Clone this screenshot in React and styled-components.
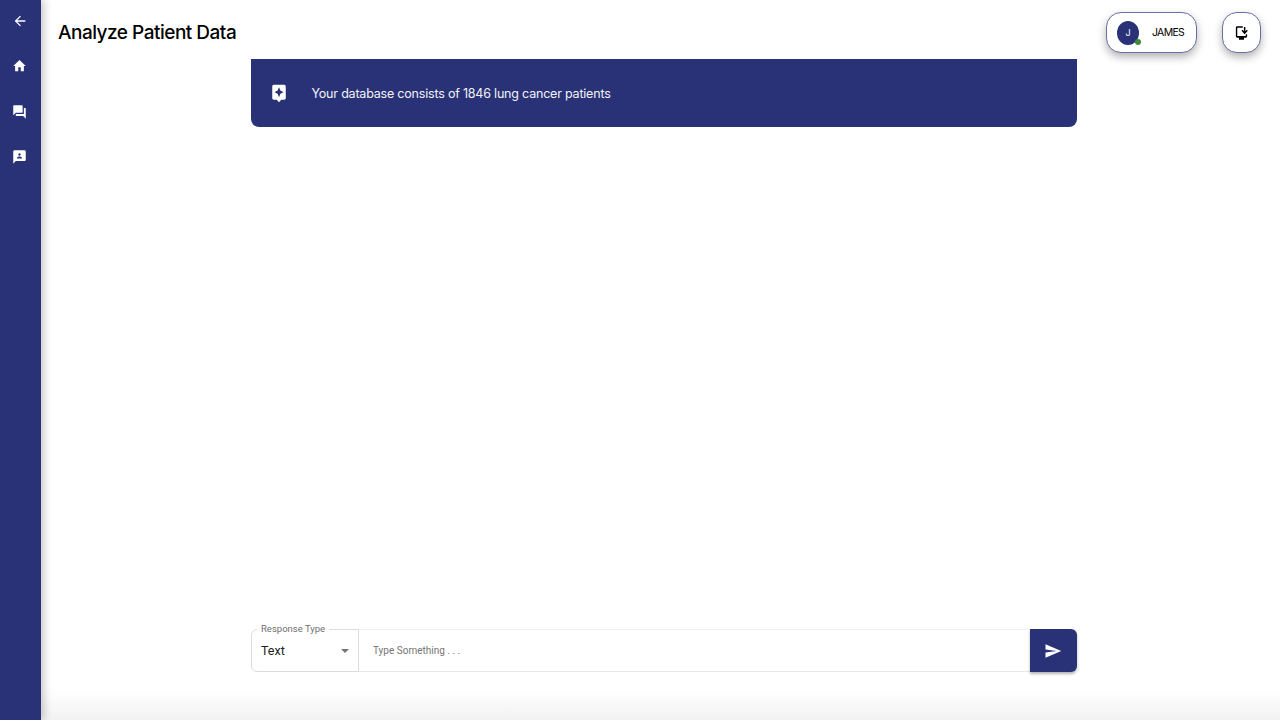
import styled, { createGlobalStyle } from "styled-components";

const NAVY = "#293276";

const Global = createGlobalStyle`
  html, body { margin: 0; padding: 0; background: #fff; }
  #root { height: 720px; overflow: hidden; }
  * { box-sizing: border-box; }
`;

// the reference is squeezed a little sideways, so icons take separate width/height
const Icon = ({ d, w = 24, h = 24 }) => (
  <svg width={w} height={h} viewBox="0 0 24 24" preserveAspectRatio="none" fill="currentColor" fillRule="evenodd">
    <path d={d} />
  </svg>
);

const ICONS = {
  back: "M20 11H7.83l5.59-5.59L12 4l-8 8 8 8 1.41-1.41L7.83 13H20v-2z",
  home: "M10 20v-6h4v6h5v-8h3L12 3 2 12h3v8z",
  chats: "M21 6h-2v9H6v2c0 .55.45 1 1 1h11l4 4V7c0-.55-.45-1-1-1m-4 6V3c0-.55-.45-1-1-1H3c-.55 0-1 .45-1 1v14l4-4h10c.55 0 1-.45 1-1",
  feedback: "M20 2H4c-1.1 0-2 .9-2 2v18l4-4h14c1.1 0 2-.9 2-2V4c0-1.1-.9-2-2-2zM12 6.4a1.9 1.9 0 1 1 0 3.8 1.9 1.9 0 0 1 0-3.8zM8 14.4v-1c0-1.3 2.7-2.1 4-2.1s4 .8 4 2.1v1z",
  assistant: "M19 2H5c-1.11 0-2 .9-2 2v14c0 1.1.89 2 2 2h4l3 3 3-3h4c1.1 0 2-.9 2-2V4c0-1.1-.9-2-2-2m-5.12 10.88L12 17l-1.88-4.12L6 11l4.12-1.88L12 5l1.88 4.12L18 11z",
  install: "M5 2h9v2.2H5.2v12.2h13.6V14H21v3c0 1.1-.9 2-2 2h-3v3H8v-3H5c-1.1 0-2-.9-2-2V4c0-1.1.9-2 2-2zM15.8 3h2.4v6.4l2.3-2.3 1.6 1.6-5.1 5.1-5.1-5.1 1.6-1.6 2.3 2.3z",
  send: "M2.01 21 23 12 2.01 3 2 10l15 2-15 2z",
};

export default function App() {
  return (
    <Page>
      <Global />
      <Sidebar>
        <NavButton><Icon d={ICONS.back} w={16} h={16} /></NavButton>
        <NavButton><Icon d={ICONS.home} w={15} h={16} /></NavButton>
        <NavButton><Icon d={ICONS.chats} w={15} h={16} /></NavButton>
        <NavButton><Icon d={ICONS.feedback} w={15} h={16} /></NavButton>
      </Sidebar>
      <Main>
        <Header>
          <Title>Analyze Patient Data</Title>
          <HeaderActions>
            <UserPill>
              <Avatar>J<OnlineDot /></Avatar>
              <UserName>JAMES</UserName>
            </UserPill>
            <IconPill><Icon d={ICONS.install} w={15} h={16} /></IconPill>
          </HeaderActions>
        </Header>
        <Content>
          <Banner>
            <BannerIcon><Icon d={ICONS.assistant} w={18} h={20} /></BannerIcon>
            <BannerText>Your database consists of 1846 lung cancer patients</BannerText>
          </Banner>
          <Composer>
            <SelectBox>
              <SelectLabel>Response Type</SelectLabel>
              <SelectValue>Text</SelectValue>
              <Caret />
            </SelectBox>
            <PromptInput>Type Something . . .</PromptInput>
            <SendButton><Icon d={ICONS.send} w={18} h={18} /></SendButton>
          </Composer>
        </Content>
      </Main>
    </Page>
  );
}

const Page = styled.div`
  position: relative;
  display: flex;
  height: 720px;
  font-family: "Inter", "Liberation Sans", sans-serif;
  color: #000;
  overflow: hidden;

  /* soft fade at the bottom edge of the page */
  &::after {
    content: "";
    position: absolute;
    left: 41px;
    right: 0;
    bottom: 0;
    height: 30px;
    background: linear-gradient(to bottom, rgba(0, 0, 0, 0), rgba(0, 0, 0, 0.05));
    pointer-events: none;
  }
`;

const Sidebar = styled.nav`
  position: relative;
  z-index: 1;
  flex: 0 0 41px;
  display: flex;
  flex-direction: column;
  align-items: center;
  gap: 29.3px;
  padding: 13px 0 0 0;
  background: ${NAVY};
  box-shadow: 3px 0 8px rgba(0, 0, 0, 0.22);
`;

const NavButton = styled.div`
  display: flex;
  justify-content: center;
  width: 16px;
  height: 16px;
  margin-left: -2px;
  color: #fff;
`;

const Main = styled.main`
  flex: 1;
  display: flex;
  flex-direction: column;
  min-width: 0;
`;

const Header = styled.header`
  flex: 0 0 59px;
  display: flex;
  align-items: flex-start;
  justify-content: space-between;
  padding: 12px 19px 0 17px;
`;

const Title = styled.h1`
  margin: 8px 0 0;
  font-size: 19px;
  line-height: 26px;
  font-weight: 500;
  letter-spacing: -0.5px;
  color: #000;
`;

const HeaderActions = styled.div`
  display: flex;
  gap: 25px;
`;

const Pill = styled.div`
  display: flex;
  align-items: center;
  height: 41px;
  background: #fff;
  border: 1px solid #6a70a3;
  border-radius: 15px;
  box-shadow: 0 4px 8px rgba(0, 0, 0, 0.3);
`;

const UserPill = styled(Pill)`
  width: 91px;
  padding-left: 10px;
`;

const IconPill = styled(Pill)`
  width: 39px;
  justify-content: center;
`;

const Avatar = styled.div`
  position: relative;
  display: flex;
  align-items: center;
  justify-content: center;
  width: 22px;
  height: 24px;
  border-radius: 50%;
  background: ${NAVY};
  color: #fff;
  font-size: 9px;
  font-weight: 400;
`;

const OnlineDot = styled.span`
  position: absolute;
  right: -2px;
  bottom: 0;
  width: 6px;
  height: 6px;
  border-radius: 50%;
  background: #3d8b37;
`;

const UserName = styled.span`
  margin-left: 13px;
  font-size: 10.5px;
  font-weight: 400;
  letter-spacing: -0.7px;
`;

const Content = styled.div`
  flex: 1;
  display: flex;
  flex-direction: column;
  justify-content: space-between;
  width: 826px;
  margin-left: 210px;
  padding-bottom: 48px;
`;

const Banner = styled.section`
  display: flex;
  align-items: center;
  height: 68px;
  padding: 0 0 0 19px;
  background: ${NAVY};
  border-radius: 0 0 8px 8px;
  color: #fff;
`;

const BannerIcon = styled.div`
  display: flex;
  width: 18px;
  height: 20px;
`;

const BannerText = styled.p`
  margin: 0 0 0 23.5px;
  font-size: 12.5px;
  font-weight: 400;
  letter-spacing: -0.2px;
  color: #f2f3f8;
`;

const Composer = styled.div`
  display: flex;
  height: 43px;
`;

const SelectBox = styled.div`
  position: relative;
  flex: 0 0 108px;
  display: flex;
  align-items: center;
  padding-left: 10px;
  border: 1px solid #dcdcdc;
  border-radius: 6px 0 0 6px;
`;

const SelectLabel = styled.span`
  position: absolute;
  top: -7px;
  left: 5px;
  padding: 0 4px;
  background: #fff;
  font-family: "Roboto", sans-serif;
  font-size: 9.5px;
  line-height: 11px;
  color: #707070;
`;

const SelectValue = styled.span`
  margin: 0 0 0 -1px;
  font-family: "Roboto", sans-serif;
  font-size: 12.5px;
  color: #222;
`;

const Caret = styled.span`
  position: absolute;
  top: 19px;
  right: 9px;
  border-left: 4px solid transparent;
  border-right: 4px solid transparent;
  border-top: 4px solid #757575;
`;

const PromptInput = styled.div`
  flex: 1;
  display: flex;
  align-items: center;
  padding-left: 14px;
  border-top: 1px solid #f1f1f1;
  border-bottom: 1px solid #e8e8e8;
  font-family: "Roboto", sans-serif;
  font-size: 10px;
  color: #757575;
`;

const SendButton = styled.div`
  flex: 0 0 47px;
  display: flex;
  align-items: center;
  justify-content: center;
  padding-right: 1px;
  background: ${NAVY};
  border-radius: 0 6px 6px 0;
  color: #fff;
  box-shadow: 0 2px 3px rgba(0, 0, 0, 0.3);
`;
